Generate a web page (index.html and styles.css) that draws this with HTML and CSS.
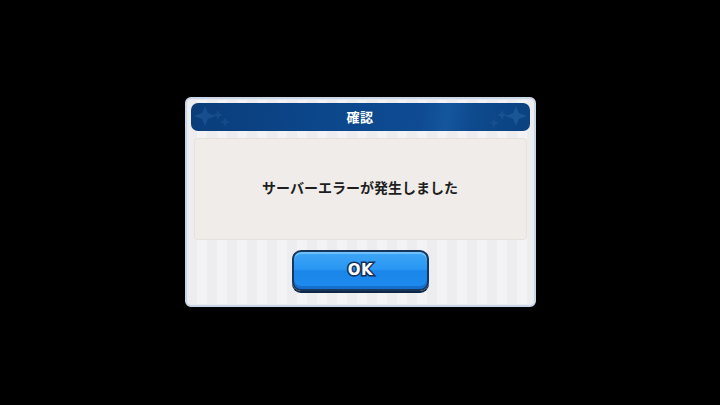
FILE: index.html
```html
<!DOCTYPE html>
<html lang="ja">
<head>
<meta charset="utf-8">
<link rel="stylesheet" href="styles.css">
</head>
<body>
<div class="stage">
  <div class="dialog">
    <div class="header">
      <svg class="spark spark-left" width="60" height="28" viewBox="0 0 60 28">
        <path d="M14 3 L18 13 L14 23 L10 13 Z M3 13 L14 9 L25 13 L14 17 Z" fill="#174f8e"/>
        <path d="M27 7 L29 12 L27 17 L25 12 Z M22 12 L27 10 L32 12 L27 14 Z" fill="#164c8a"/>
        <path d="M34 14 L36 19 L34 24 L32 19 Z M29 19 L34 17 L39 19 L34 21 Z" fill="#154a88"/>
      </svg>
      <span class="title">確認</span>
      <svg class="spark spark-right" width="60" height="28" viewBox="0 0 60 28">
        <path d="M46 3 L50 13 L46 23 L42 13 Z M35 13 L46 9 L57 13 L46 17 Z" fill="#1a5596"/>
        <path d="M32 7 L34 12 L32 17 L30 12 Z M27 12 L32 10 L37 12 L32 14 Z" fill="#185292"/>
        <path d="M24 15 L26 20 L24 25 L22 20 Z M19 20 L24 18 L29 20 L24 22 Z" fill="#17508f"/>
      </svg>
    </div>
    <div class="message">
      <p class="message-text">サーバーエラーが発生しました</p>
    </div>
    <div class="actions">
      <button class="ok-button"><span class="ok-label">OK</span></button>
    </div>
  </div>
</div>
</body>
</html>
```

FILE: styles.css
```css
* { box-sizing: border-box; }
html, body {
  margin: 0;
  padding: 0;
  background: #000;
  width: 720px;
  height: 405px;
  overflow: hidden;
}
.stage {
  width: 720px;
  height: 405px;
  display: flex;
  align-items: center;
  justify-content: center;
}
.dialog {
  width: 351px;
  height: 210px;
  margin-top: -1px;
  border: 2px solid #c9d6e6;
  border-radius: 6px;
  padding: 4px 4px 0 4px;
  background:
    repeating-linear-gradient(90deg, #ededf0 0 10px, #f3f3f5 10px 20px);
  display: flex;
  flex-direction: column;
  box-shadow: inset 0 0 0 1px #e8ecf2;
}
.header {
  position: relative;
  height: 28px;
  border-radius: 7px;
  background: linear-gradient(100deg, #0a3d7a 0%, #0c478c 40%, #0e4b92 68%, #14569d 75%, #0e4a8f 82%, #0b427f 100%);
  display: flex;
  align-items: center;
  justify-content: center;
  overflow: hidden;
}
.spark {
  position: absolute;
  top: 0;
}
.spark-left { left: 0; }
.spark-right { right: 0; }
.title {
  color: #fff;
  font-family: "Noto Sans CJK JP", sans-serif;
  font-weight: 700;
  font-size: 13px;
  letter-spacing: 0.5px;
  position: relative;
  margin-top: -1px;
}
.message {
  margin: 7px 3px 0 3px;
  height: 102px;
  border-radius: 4px;
  background: #efecea;
  border: 1px solid #e6e1dd;
  display: flex;
  align-items: center;
  justify-content: center;
}
.message-text {
  margin: 0;
  font-family: "Noto Sans CJK JP", sans-serif;
  font-weight: 700;
  font-size: 14px;
  color: #1e1e1e;
  margin-top: -4px;
}
.actions {
  display: flex;
  justify-content: center;
  margin-top: 10px;
}
.ok-button {
  width: 137px;
  height: 41px;
  padding: 0;
  border: 2px solid #17375f;
  border-radius: 9px;
  background:
    linear-gradient(180deg, #3fa6f6 0%, #2a97f3 45%, #1b86ea 52%, #1e8bee 100%);
  box-shadow: inset 0 2px 0 #6fc0fa, inset 0 -3px 0 #1570cc, 0 2px 0 #0e2744;
  display: flex;
  align-items: center;
  justify-content: center;
  font: inherit;
  margin-left: 1px;
}
.ok-label {
  font-family: "DejaVu Sans", sans-serif;
  font-weight: 700;
  font-size: 15px;
  color: #fff;
  -webkit-text-stroke: 3px #14305a;
  paint-order: stroke fill;
  letter-spacing: 0.5px;
  margin-top: -1px;
}
```
